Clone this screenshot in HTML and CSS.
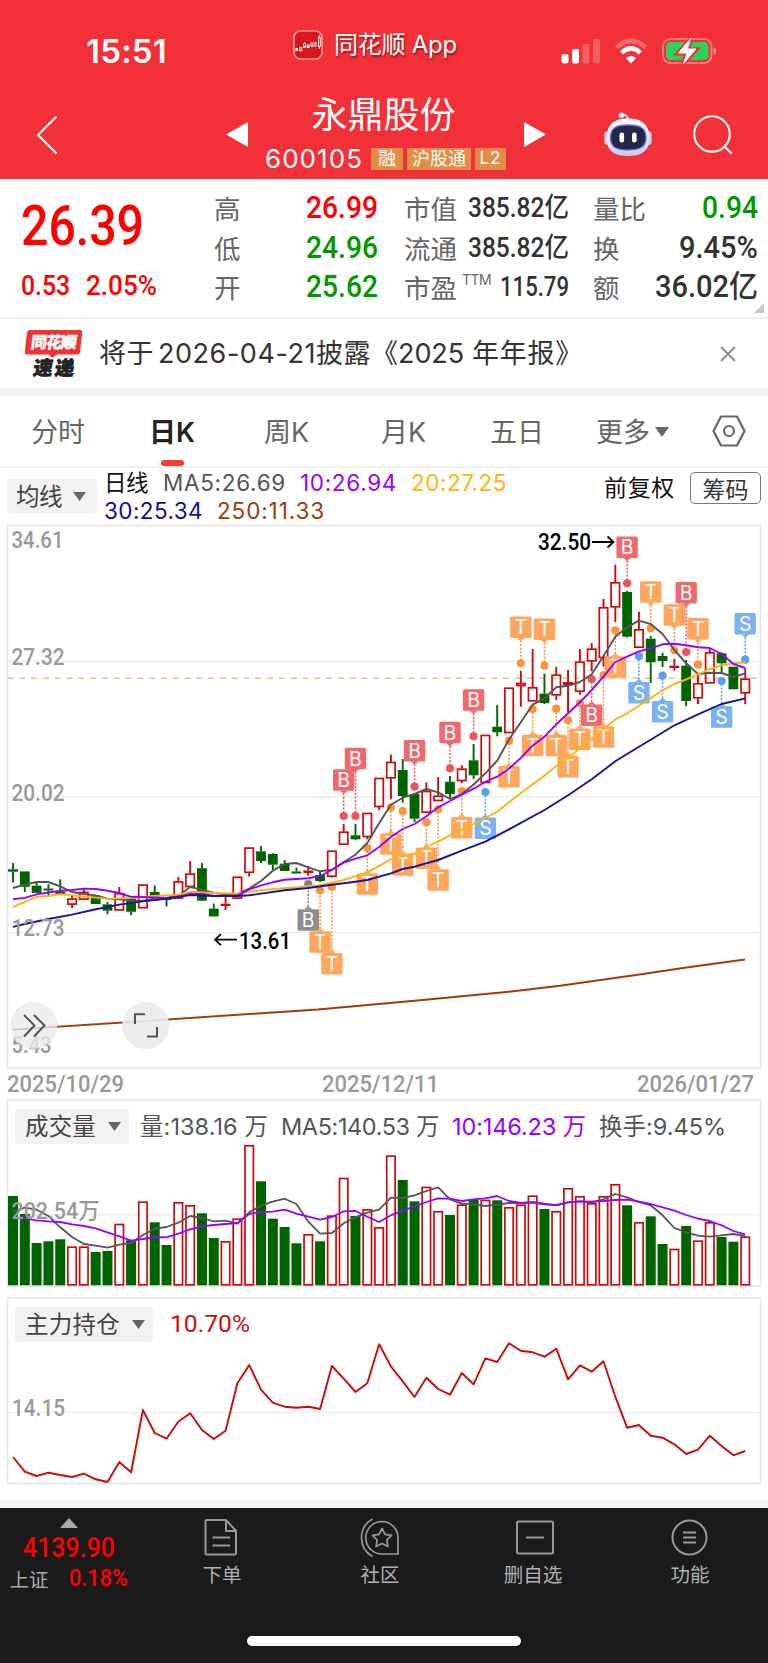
FILE: index.html
```html
<!DOCTYPE html>
<html lang="zh-CN">
<head>
<meta charset="utf-8">
<title>永鼎股份 600105</title>
<link rel="stylesheet" href="styles.css">
</head>
<body>
<div class="app">
  <header class="top">
    <div class="status">
      <div class="clock"><span data-w="81">15:51</span></div>
      <div class="source">
        <svg width="30" height="30" viewBox="0 0 30 30">
          <rect x="1" y="1" width="28" height="28" rx="6.5" fill="#d9161c" stroke="#f7999b" stroke-width="1.6"/>
          <g fill="#fff"><rect x="2.5" y="18" width="2.4" height="3"/><rect x="13.8" y="14.5" width="2.6" height="3.5"/><rect x="21.5" y="12" width="2" height="4.5"/></g>
          <g fill="none" stroke="#fff" stroke-width="1"><rect x="6.8" y="17.5" width="2" height="3.4"/><rect x="10.5" y="13.5" width="2" height="3.6"/><rect x="18" y="13" width="2" height="3.4"/><path d="M25.5 7.500h1.800v9h-1.800zM26.400 5v2.500M26.400 16.500v2.500M11.500 12v1.500"/></g>
        </svg>
        <span data-w="123">同花顺 App</span>
      </div>
      <svg class="signals" width="158" height="28" viewBox="560 37 158 28">
        <g fill="#fff">
          <rect x="561.500" y="54" width="7" height="9.500" rx="2"/><rect x="572" y="49" width="7" height="14.500" rx="2"/>
          <rect x="582.500" y="44" width="7" height="19.500" rx="2" opacity=".22"/><rect x="593" y="39" width="7" height="24.500" rx="2" opacity=".22"/>
        </g>
        <path d="M616.500 47.500Q631 34 645.500 47.500" fill="none" stroke="#fff" stroke-opacity=".28" stroke-width="4.600"/>
        <path d="M621.500 52.800Q631 44 640.500 52.800" fill="none" stroke="#fff" stroke-width="4.400"/>
        <path d="M626 58.200Q631 53.600 636 58.200L631 63.400z" fill="#fff"/>
        <rect x="663" y="39" width="48.500" height="24" rx="7.500" fill="none" stroke="#fff" stroke-opacity=".45" stroke-width="1.700"/>
        <path d="M713.500 47.500q2.500 1 2.500 3.700t-2.500 3.700z" fill="#fff" opacity=".5"/>
        <rect x="666" y="42" width="42.500" height="18" rx="4.500" fill="#30d158"/>
        <path d="M690.500 39L677.500 53.500h8.500L683 64L696.500 49.500h-8.500z" fill="#fff" stroke="#f23038" stroke-width="4"/>
        <path d="M690.500 38.500L678.500 53h8.500L683.500 63.500L696 49h-8.500z" fill="#fff" stroke="#fff" stroke-width="1" stroke-linejoin="round"/>
      </svg>
    </div>
    <nav class="nav">
      <svg class="n-back" width="22" height="40" viewBox="0 0 22 40"><path d="M20.500 1.500L2 20L20.500 38.500" fill="none" stroke="#fff" stroke-width="2"/></svg>
      <svg class="n-prev" width="22" height="25" viewBox="0 0 22 25"><path d="M22 0V25L0 12.500z" fill="#fff"/></svg>
      <div class="title">
        <h1><span data-w="144">永鼎股份</span></h1>
        <div class="code"><span class="num" data-w="98">600105</span><i class="tag t1">融</i><i class="tag t2">沪股通</i><i class="tag t3">L2</i></div>
      </div>
      <svg class="n-next" width="22" height="25" viewBox="0 0 22 25"><path d="M0 0V25L22 12.500z" fill="#fff"/></svg>
      <svg class="n-bot" width="50" height="46" viewBox="603 111 50 46">
        <defs><linearGradient id="shell" x1="0" y1="0" x2="0" y2="1"><stop offset="0" stop-color="#fff"/><stop offset=".6" stop-color="#e6e5f8"/><stop offset="1" stop-color="#cbc8ea"/></linearGradient></defs>
        <path d="M621 115q7-1 7 5" fill="none" stroke="#e4e4f6" stroke-width="2"/><circle cx="621.500" cy="115.300" r="2.700" fill="#f3f1fc"/>
        <rect x="604.300" y="131" width="7" height="14" rx="3.500" fill="#c9c9ec"/><rect x="644.700" y="131" width="7" height="14" rx="3.500" fill="#c9c9ec"/>
        <path d="M628 118.500C643 118.500 649.500 126 649.500 138C649.500 150 643 156 628 156S606.500 150 606.500 138C606.500 126 613 118.500 628 118.500z" fill="url(#shell)"/>
        <path d="M628 125C640 125 646 128 646 137.500S640 150 628 150S610.500 147 610.500 137.500S616 125 628 125z" fill="#202949" stroke="#7468d4" stroke-width="1.300"/>
        <rect x="619.500" y="132.500" width="4.600" height="10" rx="2.200" fill="#fff"/><rect x="632" y="132.500" width="4.600" height="10" rx="2.200" fill="#fff"/>
      </svg>
      <svg class="n-search" width="40" height="40" viewBox="0 0 40 40"><g fill="none" stroke="#fff" stroke-width="2.100"><circle cx="19" cy="19" r="17.800"/><path d="M31 31L38.500 38.500"/></g></svg>
    </nav>
  </header>

  <section class="quote">
    <div class="price">
      <strong><span class="din" data-w="123">26.39</span></strong>
      <div class="chg"><span class="din" data-w="49">0.53</span><span class="din" data-w="71">2.05%</span></div>
    </div>
    <dl class="c1">
      <dt>高</dt><dd class="up"><span class="din" data-w="72">26.99</span></dd>
      <dt>低</dt><dd class="down"><span class="din" data-w="72">24.96</span></dd>
      <dt>开</dt><dd class="down"><span class="din" data-w="72">25.62</span></dd>
    </dl>
    <dl class="c2">
      <dt>市值</dt><dd><span class="din" data-w="101">385.82亿</span></dd>
      <dt>流通</dt><dd><span class="din" data-w="101">385.82亿</span></dd>
      <dt>市盈<sup>TTM</sup></dt><dd><span class="din" data-w="69">115.79</span></dd>
    </dl>
    <dl class="c3">
      <dt>量比</dt><dd class="down"><span class="din" data-w="56">0.94</span></dd>
      <dt>换</dt><dd><span class="din" data-w="79">9.45%</span></dd>
      <dt>额</dt><dd><span class="din" data-w="103">36.02亿</span></dd>
    </dl>
    <svg class="corner" width="10" height="10" viewBox="0 0 10 10"><path d="M10 0V10H0z" fill="#c8c8c8"/></svg>
  </section>

  <section class="news">
    <svg width="60" height="50" viewBox="24 328 60 50">
      <path d="M30 329H80q2.500 0 2.200 2.500L80 351q-.3 2.500-3 2.500H56.500L52 357L49 353.500H27q-2.500 0-2.200-2.500L27 331.500q.3-2.500 3-2.500z" fill="#ee3236"/>
      <g transform="translate(49 0) skewX(-8)" font-family="Noto Sans CJK SC" font-weight="900" text-anchor="middle">
        <text x="53" y="347" font-size="16" fill="#fff" stroke="#fff" stroke-width=".4" textLength="46">同花顺</text>
        <text x="56.500" y="374" font-size="19.500" fill="#222" stroke="#222" stroke-width=".6" textLength="41">速递</text>
      </g>
    </svg>
    <p><span data-w="55">将于</span><span class="nd" data-w="158">2026-04-21</span><span data-w="55">披露</span><span data-w="27">《</span><span data-w="66">2025</span><span class="nb" data-w="111">年年报》</span></p>
    <svg class="close" width="16" height="16" viewBox="0 0 16 16"><path d="M1 1L15 15M15 1L1 15" stroke="#8c8c8c" stroke-width="1.800"/></svg>
  </section>

  <nav class="tabs">
    <span>分时</span><span class="on">日K</span><span>周K</span><span>月K</span><span>五日</span>
    <span class="more">更多<svg width="14" height="10" viewBox="0 0 14 10"><path d="M0 0H14L7 10z" fill="#666"/></svg></span>
    <svg class="hex" width="34" height="32" viewBox="0 0 34 32"><g fill="none" stroke="#666" stroke-width="2.200"><path d="M9 1.500H25L32.500 16L25 30.500H9L1.500 16z" stroke-linejoin="round"/><circle cx="17" cy="16" r="5"/></g></svg>
  </nav>

  <section class="ma">
    <span class="chip chip-ma"><span data-w="46">均线</span><svg width="13" height="9" viewBox="0 0 13 9"><path d="M0 0H13L6.500 9z" fill="#666"/></svg></span>
    <div class="malist">
      <div><b class="k" data-w="44">日线</b><b class="g" data-w="123">MA5:26.69</b><b class="p" data-w="97">10:26.94</b><b class="o" data-w="96">20:27.25</b></div>
      <div><b class="n" data-w="99">30:25.34</b><b class="r" data-w="108">250:11.33</b></div>
    </div>
    <span class="adj"><span data-w="71">前复权</span></span>
    <button class="chipbtn">筹码</button>
  </section>

  <svg id="kline" width="768" height="546" viewBox="0 524 768 546"></svg>
  <div class="dates"><span class="din" data-w="117">2025/10/29</span><span class="din" data-w="117">2025/12/11</span><span class="din" data-w="117">2026/01/27</span></div>

  <section class="panel vol">
    <svg id="volume" width="768" height="190" viewBox="0 1099 768 190"></svg>
    <div class="legend">
      <span class="chip"><span data-w="71">成交量</span><svg width="13" height="9" viewBox="0 0 13 9"><path d="M0 0H13L6.500 9z" fill="#666"/></svg></span>
      <b class="g" data-w="128">量:138.16 万</b><b class="g" data-w="158">MA5:140.53 万</b><b class="p" data-w="134">10:146.23 万</b><b class="g" data-w="127">换手:9.45%</b>
    </div>
  </section>

  <section class="panel hold">
    <svg id="holding" width="768" height="189" viewBox="0 1297 768 189"></svg>
    <div class="legend">
      <span class="chip chip-hold"><span data-w="95">主力持仓</span><svg width="13" height="9" viewBox="0 0 13 9"><path d="M0 0H13L6.500 9z" fill="#666"/></svg></span>
      <b class="red din" data-w="80">10.70%</b>
    </div>
  </section>

  <footer class="bottom">
    <div class="index">
      <svg width="18" height="10" viewBox="0 0 18 10"><path d="M9 0L18 10H0z" fill="#aaa"/></svg>
      <div class="ival"><span class="din" data-w="92">4139.90</span></div>
      <div class="ichg"><em data-w="39">上证</em><span class="din" data-w="59">0.18%</span></div>
    </div>
    <div class="act"><svg width="40" height="40" viewBox="0 0 40 40"><g fill="none" stroke="#989898" stroke-width="2"><path d="M4.500 3H24L34 14V36.500q0 1-1 1H4.500q-1 0-1-1V4q0-1 1-1z"/><path d="M24 3V14H34M10.500 20.500H28M10.500 28.500H28"/></g></svg><span>下单</span></div>
    <div class="act"><svg width="40" height="40" viewBox="0 0 40 40"><g fill="none" stroke="#989898" stroke-width="1.700"><path d="M22 4.500A16.200 16.200 0 0 0 22 37H38V20.700A16.200 16.200 0 0 0 22 4.500z"/><path d="M12.500 2A21.500 21.500 0 0 0 12.500 39.500"/><path d="M22 11.500L25 17.400L31.500 18.400L26.800 23L27.900 29.500L22 26.400L16.100 29.500L17.200 23L12.500 18.400L19 17.400z" stroke-linejoin="round"/></g></svg><span>社区</span></div>
    <div class="act"><svg width="40" height="40" viewBox="0 0 40 40"><g fill="none" stroke="#989898" stroke-width="2"><rect x="4" y="4.500" width="36" height="32" rx="1.500"/><path d="M13 20.500H31"/></g></svg><span>删自选</span></div>
    <div class="act"><svg width="40" height="40" viewBox="0 0 40 40"><g fill="none" stroke="#989898" stroke-width="2"><circle cx="19.500" cy="20.500" r="17"/><path d="M13 15.500H26M13 20.500H26M13 25.500H26"/></g></svg><span>功能</span></div>
    <div class="home"></div>
  </footer>
</div>
<script src="chart.js"></script>
</body>
</html>
```

FILE: styles.css
```css
* { box-sizing: border-box; }
body { margin: 0; background: #fff; font-family: Inter, "Noto Sans CJK SC", sans-serif; color: #333; }
.app { width: 768px; height: 1663px; display: flex; flex-direction: column; overflow: hidden; line-height: 1; white-space: nowrap; }
.app > * { flex: none; }
svg { display: block; overflow: visible; }
[data-w] { display: inline-block; white-space: pre; flex: none; }
.din { transform-origin: 0 50%; }
b, em, i { font-weight: 400; font-style: normal; }

.top { height: 179px; background: #f23038; color: #fff; }
.status { display: grid; grid-template-columns: 207px 267px 158px; padding: 30px 0 0 86px; height: 94px; }
.clock { font-size: 33px; font-weight: 600; padding-top: 5px; }
.source { display: flex; gap: 11px; font-size: 24px; height: 30px; align-items: center; text-shadow: 1px 2px 2px rgba(80,0,0,.55); }
.signals { margin-top: 7px; }
.nav { display: grid; grid-template-columns: 190px 22px 276px 80px 89px 40px; height: 85px; padding-left: 36px; }
.n-back { margin-top: 21px; }
.n-prev, .n-next { margin-top: 28px; }
.n-bot { margin: 17px 0 0 -1px; }
.n-search { margin-top: 21px; }
.title { display: flex; flex-direction: column; align-items: center; }
.title h1 { margin: 3px 5px 0 0; font-size: 36px; font-weight: 400; line-height: 36px; }
.code { display: flex; align-items: center; height: 24px; margin: 13px 1px 0 0; padding-top: 1px; }
.code .num { font-size: 26px; margin-right: 8px; }
.tag { background: #e08d45; font-size: 18px; height: 22px; line-height: 21px; text-align: center; margin-right: 4px; }
.t1 { width: 32px; }
.t2 { width: 64px; }
.t3 { width: 31px; margin-right: 0; font-size: 17px; letter-spacing: 1px; }

.quote { height: 140px; display: grid; grid-template-columns: 193px 190px 189px 164px; padding-left: 21px; border-bottom: 2px solid #f0f0f0; font-family: Roboto, "Noto Sans CJK SC", sans-serif; font-weight: 500; position: relative; }
.price { color: #f00; padding-top: 20px; }
.price strong { display: block; font-size: 55px; font-weight: 500; line-height: 55px; }
.chg { display: flex; gap: 16px; font-size: 28px; margin-top: 18px; line-height: 28px; }
.quote dl { margin: 0; display: grid; grid-template-columns: 56px 1fr; grid-template-rows: repeat(3, 39.7px); align-items: center; padding-top: 9px; }
.quote .c1 { width: 164px; }
.quote .c2 { width: 165px; }
.quote .c3 { width: 165px; }
.quote dt { font-size: 26.5px; color: #666; font-weight: 400; font-family: "Noto Sans CJK SC"; line-height: 30px; height: 30px; }
.quote dd { margin: 1px 0 0; text-align: right; font-size: 30.5px; color: #333; }
.quote dd.up { color: #f00; }
.quote dd.down { color: #090; }
.quote .c2 dd { font-size: 27px; }
.c2 sup { font: 14px Inter, sans-serif; vertical-align: 13px; margin-left: 5px; line-height: 0; letter-spacing: -.5px; }
.corner { position: absolute; right: 4px; bottom: 4px; }

.news { height: 69px; display: flex; align-items: center; padding: 0 32px 0 24px; }
.news p { margin: 0 0 0 15px; font-size: 27px; flex: 1; line-height: 32px; }
.news .nd { margin-left: 4px; }
.news .nb { margin-left: 8px; }
.tabs { height: 80px; border-top: 8px solid #f4f4f4; border-bottom: 2px solid #eee; display: grid; grid-template-columns: 118px 115px 117px 109px 106px 116px 34px; padding-left: 31px; font-size: 27px; color: #666; align-items: center; }
.tabs > span { padding-top: 2px; }
.tabs .on { color: #222; font-weight: 600; position: relative; }
.tabs .on::after { content: ""; position: absolute; left: 12px; top: 43px; width: 23px; height: 6px; border-radius: 3px; background: #fb3b33; }
.more { display: flex; align-items: center; gap: 5px; }

.ma { height: 56px; display: flex; font-size: 22.5px; padding-left: 7px; }
.chip { display: flex; align-items: center; gap: 12px; background: #f2f2f2; color: #444; border-radius: 4px; height: 35px; width: 114px; padding-left: 10px; font-size: 23.5px; flex: none; }
.chip-ma { width: 90px; margin-top: 11px; gap: 11px; padding-left: 9px; }
.chip-hold { width: 138px; }
.malist { margin-left: 7px; padding-top: 1px; width: 500px; flex: none; }
.malist div { display: flex; gap: 14px; height: 28px; align-items: center; }
.malist div:first-child b:first-child { margin-right: 1px; }
.k { color: #111; } .g { color: #555; } .p { color: #9a00ff; } .o { color: #ffb30f; } .n { color: #100c9c; } .r { color: #9c3c0a; } .red { color: #cc1010; }
.adj { color: #111; font-size: 23px; margin-top: 9px; width: 86px; flex: none; }
.chipbtn { flex: none; width: 71px; height: 32px; margin-top: 4px; border: 1.5px solid #777; border-radius: 5px; background: #fff; font: 23px/28px "Noto Sans CJK SC"; color: #333; padding: 0; }
.dates { height: 29px; display: flex; justify-content: space-between; padding: 3px 14px 0 7px; font: 500 23px/23px Roboto, sans-serif; color: #999; }

.panel { display: grid; }
.panel > * { grid-area: 1 / 1; }
.legend { display: flex; height: 35px; align-items: center; margin: 10px 0 0 15px; font-size: 23.5px; }
.vol { height: 198px; }
.vol b:nth-child(2) { margin-left: 11px; }
.vol b + b { margin-left: 13px; }
.hold { height: 203px; }
.hold b { margin-left: 17px; font-family: Roboto; font-weight: 400; font-size: 24.5px; }

.bottom { height: 163px; border-top: 8px solid #f4f4f4; background: #1a1a1a; display: grid; grid-template-columns: 138px 168px 148px 158px 156px; grid-template-rows: 128px 27px; color: #b0b0b0; }
.index { display: flex; flex-direction: column; align-items: center; padding-top: 10px; font-family: Roboto; font-weight: 500; color: #f00; }
.ival { font-size: 27px; line-height: 27px; margin-top: 7px; }
.ichg { font-size: 23.5px; display: flex; align-items: center; gap: 21px; margin-top: 5px; }
.ichg em { color: #aaa; font-family: "Noto Sans CJK SC"; font-size: 19.5px; font-weight: 400; }
.act { display: flex; flex-direction: column; align-items: center; padding-top: 9px; font-size: 19.5px; font-family: "Noto Sans CJK SC"; }
.act span { margin-top: 6px; line-height: 22px; }
.home { grid-column: 1 / -1; justify-self: center; width: 274px; height: 10px; border-radius: 5px; background: #fff; }
```

FILE: chart.js
```js
// Fit every label to the width reserved for it: condensed figures are
// scaled, all other text is spaced out.
document.querySelectorAll('[data-w]').forEach(el => {
  const n = [...el.textContent].length;
  const w = el.getBoundingClientRect().width;
  const target = +el.dataset.w;
  if (el.classList.contains('din')) {
    el.style.transform = `scaleX(${(target / w).toFixed(4)})`;
    el.style.marginRight = (target - w).toFixed(2) + 'px';
  } else {
    el.style.letterSpacing = ((target - w) / n).toFixed(3) + 'px';
  }
});

const X = i => 13 + 11.81 * i;
const RED = '#cc0a0a', GREEN = '#006400';
const line = (pts, color, w = 1.5) => `<polyline points="${pts.map(p => p.join()).join(' ')}" fill="none" stroke="${color}" stroke-width="${w}" stroke-linejoin="round"/>`;
const series = (o, color, w) => line(o.map((y, i) => y == null ? null : [X(i).toFixed(1), y]).filter(Boolean), color, w);
const hline = (y, c = '#ededed') => `<path d="M8 ${y}H760" stroke="${c}" stroke-width="1.4"/>`;
const frame = (y, h) => `<rect x="7.5" y="${y}" width="753" height="${h}" fill="none" stroke="#e6e6e6" stroke-width="1.6"/>`;
const label = (x, y, s, w, c = '#999', size = 23) => `<text x="${x}" y="${y}" font-family="Roboto, Noto Sans CJK SC" font-weight="500" font-size="${size}" fill="${c}" textLength="${w}" lengthAdjust="spacingAndGlyphs">${s}</text>`;

// colour, high, body top, body bottom, low
const K = `g 863 869.3 871.7 882.5|g 871.4 871.4 886.8 892|g 882.9 885.7 892.9 892.9|g 884.3 888.5 890.5 896|g 879.3 891.4 894.3 894.3|r 895 898.6 904.6 908|r 888 892 899.6 899.6|g 895.4 895.4 904 904|g 902 904.3 910.7 914.3|r 887 893.2 910.4 910.4|g 898.6 898.6 911.8 915|r 884.6 884.6 908.2 908.2|g 885.4 892 895.7 895.7|g 898 898.4 900 906.4|r 877 881.4 898.6 898.6|r 861 873.6 887 887|g 863 868.2 900.7 901|g 903.6 908.6 916.4 916.4|r 897 903.7 906 910|r 876.8 876.8 898.6 898.6|r 847.6 847.6 872.8 876.5|g 846 851.3 861 863|g 853.3 854 864.7 870.3|g 860 863.7 871 871|g 867.7 871.5 873.5 873.5|r 866 870.5 873 875.7|g 871 875 881 882|r 850.7 850.7 876.7 877.7|r 824 831.7 844.7 844.7|g 823.7 835.3 839.3 840.3|r 813 813 837 839.3|r 778 778 807 810|r 754.7 762 778.3 799.3|g 759 770 796 802.7|g 793 794 818.7 822|r 782.3 791 812.7 812.7|r 777 795.7 801 801|g 776 781.7 794 798.7|r 765.3 768.7 781 783|g 744 760.3 775.3 779|r 735 735 783 783|g 705 726.7 732.3 736.3|r 687.7 687.7 733 733|r 670.7 683 686 706.7|r 649 687.3 701.3 701.3|g 673.7 693.7 703 704|r 666.7 674.7 695.3 700|r 670 682.3 685 712.3|r 649 661.7 691.7 694.7|r 643 648.7 661.3 671.3|r 599 607.3 658 666.7|r 564.7 582.3 607.3 622|g 591 592 636.7 637.7|r 611.7 629.3 647.7 647.7|g 636 638.7 662.3 683|g 652.7 656 661 667|r 658.7 665.7 668 670.7|g 660 665.7 701 706.3|r 674.3 683.3 698.3 704|r 649 652.3 683.3 683.3|g 652.3 653.3 663.3 672.7|g 666.7 666.7 689.3 689.3|r 668.3 678.7 693.3 704.3`
  .split('|').map(s => { const a = s.split(' '); return [a[0], ...a.slice(1).map(Number)]; });

const candles = K.map(([c, h, t, b, l], i) => {
  const x = X(i), col = c === 'r' ? RED : GREEN;
  const wick = `<path d="M${x} ${h}V${t}M${x} ${b}V${l}" stroke="${col}" stroke-width="1.9"/>`;
  return wick + (c === 'r' && b - t > 2.6
    ? `<rect x="${x - 4.2}" y="${t + .5}" width="8.4" height="${b - t - 1}" fill="none" stroke="${col}" stroke-width="1.7"/>`
    : `<rect x="${x - 4.9}" y="${t}" width="9.8" height="${b - t}" fill="${col}"/>`);
}).join('');

const ma5 = [888,884.6,882,882,886.4,892,894,895.4,898.6,899.3,900.7,900.7,898.6,898,895.7,887,889.6,893,894.3,894,888.5,881,870.7,864,863,867.3,871.3,869.7,862,854.7,843,823.3,804.7,797.7,794,789,792.3,799,794,784.5,773.3,760.7,739.5,722.3,704.7,698.3,687.3,685.7,682,674.3,656,636.7,627.3,620.7,624,634,650,663.3,674,672.7,673,677,673.3];
const ma10 = [899.3,897.9,894.3,892.5,890.7,890,888.6,889,890.7,893,896.8,897,897.5,897.9,896.8,893.6,894.3,895.7,896,895.7,889.3,885.3,882.3,879.7,879,878.3,876,870,862.7,858.7,855.3,847,837,829,824,816.3,807.3,801,794.7,788.7,781.8,776.7,768.7,758,745.7,736.7,724.3,713.3,702.3,690,676.7,662,656.7,651.3,648.3,644.3,643.7,645.3,647.3,648,654,664,668];
const _ = null;
const ma20 = [906.8,902,896.8,896,894.3,_,_,_,898.6,_,898,_,896,_,894.6,891.8,_,893,_,893.6,891.7,_,889,_,887.3,_,885.3,_,880,_,872.3,_,859.3,855.3,853.7,847,841.7,835.3,829.3,824,818,811.7,802.3,793.3,784.3,775.7,766,757.7,748.3,739.3,729.3,719.3,713.3,705.7,698,690.3,684,679.3,674.3,669,665.3,663.3,662.3];
const ma30 = [926.8,924,_,919,_,914.6,_,909.3,_,904.6,_,901.4,_,898.9,_,895,_,896,_,896,895.3,_,_,890.3,_,888,_,884.7,_,881.7,880,_,873.3,869,866.7,_,860,_,850.7,_,841.7,_,829.3,_,_,810,_,795.3,_,779.3,_,761.3,_,746.7,739.7,_,725.3,_,714.3,_,704,_,698.3];

// kind, candle, badge centre, dot centre
const M = `B 28 780 816|B 29 758.5 816|B 34 750.8 786.7|B 37 732.5 768.3|B 39 700 736.3|X 25 920 884|T 26 942 890.3|T 27 963.7 887|T 30 884 848|T 32 844 807.3|T 33 865 811|T 35 858.3 822.3|T 36 880 809.3|T 38 827.7 791|S 40 828.3 792|T 42 776.7 740.7|T 43 627.3 663.3|T 44 745.5 709|T 45 629.3 665.7|T 46 745.5 708.7|T 47 766.7 720.3|T 48 739.3 703|B 49 715.3 679|T 50 737 675|T 51 667 630.3|B 52 547.3 583.3|S 53 692.7 656.3|T 54 592 628.3|S 55 711.8 675.7|T 56 615 650.3|B 57 592.7 652|T 58 628.7 664.7|S 60 717 681|S 62 623.7 659.7`.split('|').map(s => s.split(' '));
const tone = { B: ['#ee6a6e', '#eb555b'], T: ['#ffa55c', '#fb923c'], S: ['#7cb1f2', '#5b9fee'], X: ['#8e8e8e', '#808080'] };
const marks = M.map(([k, i, yb, yd]) => {
  const x = X(+i), up = +yb < +yd ? 1 : -1, e = +yb + up * 10.5;
  const [bg, dot] = tone[k];
  return `<path d="M${x} ${e + up * 3}V${yd}" stroke="${dot}" stroke-width="1.5" stroke-dasharray="2 1.5"/><circle cx="${x}" cy="${yd}" r="4.1" fill="${dot}"/>
  <path d="M${x - 4} ${e}h8l-4 ${up * 3.5}z" fill="${bg}"/><rect x="${x - 10.7}" y="${yb - 10.7}" width="21.4" height="21.4" rx="1.5" fill="${bg}"/>
  <text x="${x}" y="${+yb + 7}" font-family="Inter" font-size="19.5" fill="#fff" text-anchor="middle">${k === 'X' ? 'B' : k}</text>`;
}).join('');

document.getElementById('kline').innerHTML =
  frame(525.5, 542.5) + hline(661.4) + hline(796.8) + hline(932.5) +
  '<path d="M7.5 678.3H760" stroke="#e5c194" stroke-width="1.4" stroke-dasharray="6 5.8"/>' +
  candles + marks +
  series(ma5, '#555', 1.9) + series(ma20, '#ffb30f', 1.9) + series(ma10, '#9a00ff', 1.9) + series(ma30, '#1414a0', 1.9) +
  line([[13,1029.6],[138,1021.5],[249,1014],[318,1009.5],[420,1000.3],[509,991.7],[560,985.8],[636,975],[690,967],[745,959.5]], '#a03c0c', 1.9) +
  label(11.5, 548, '34.61', 52) + label(11.5, 665, '27.32', 53) + label(11.5, 800.5, '20.02', 53) + label(11.5, 936, '12.73', 53) + label(11.5, 1053, '5.43', 40) +
  label(239, 948.5, '13.61', 52, '#000') + label(538, 550, '32.50', 53, '#000') +
  '<path d="M237 939.7H215M221 934.2L215 939.7L221 945.2M592 542H613M607.5 536.5L613.5 542L607.5 547.5" fill="none" stroke="#000" stroke-width="1.8"/>' +
  '<circle cx="33.7" cy="1025.5" r="23.5" fill="#ebebeb" fill-opacity=".78"/><circle cx="145.7" cy="1025.5" r="23.5" fill="#ebebeb" fill-opacity=".9"/>' +
  '<g fill="none" stroke="#555" stroke-width="2"><path d="M24 1015L34.5 1025.5L24 1036.5M34 1015L44.5 1025.5L34 1036.5M145 1014.3H135V1024M147 1036.5H157V1027"/></g>';

// bar tops, in thirds of a pixel below y = 1080
const V = [348,402,489,484,478,500,500,516,513,432,481,365,427,495,367,376,400,474,484,416,196,304,416,441,490,463,484,407,294,408,388,442,227,300,364,321,394,405,374,359,360,361,382,374,347,387,394,325,349,370,349,313,376,427,409,492,507,438,482,427,471,485,470];
const hollow = new Set([5,6,9,11,14,15,18,19,20,25,27,28,30,31,32,35,36,38,40,42,43,44,46,47,48,49,50,51,53,56,58,59,62]);
const vy = v => v == null ? v : +(1080 + v / 3).toFixed(1);
const v5 = [395,383,389,408,442,471,492,497,503,494,489,465,446,441,428,408,414,424,422,431,397,377,365,356,372,425,461,459,430,412,398,389,353,354,346,333,322,358,371,373,378,374,369,369,366,371,376,367,364,367,358,342,352,366,376,406,444,457,467,470,466,462,468].map(vy);
const v10 = [415,415,421,424,426,433,438,445,457,469,482,477,471,472,461,448,439,435,432,429,402,396,395,389,401,410,419,411,394,393,410,426,406,392,379,366,355,356,363,358,355,348,363,369,368,373,375,367,364,365,363,360,359,365,372,382,392,405,416,423,436,453,463].map(vy);
document.getElementById('volume').innerHTML =
  frame(1100, 186) + hline(1214.7) +
  V.map((v, i) => {
    const x = X(i), y = vy(v);
    return hollow.has(i)
      ? `<rect x="${x - 4.2}" y="${y + .5}" width="8.4" height="${1284.3 - y}" fill="#fff" stroke="${RED}" stroke-width="1.7"/>`
      : `<rect x="${x - 5}" y="${y}" width="10" height="${1285.3 - y}" fill="${GREEN}"/>`;
  }).join('') +
  series(v5, '#555', 1.8) + series(v10, '#9a00ff', 1.8) + label(11.5, 1218.5, '202.54万', 88);

const H = [501,545,558,548,555,561,551,568,576,516,547,360,429,446,395,370,420,447,422,280,225,299,338,350,353,350,357,228,266,306,280,163,229,274,321,263,297,314,249,283,205,216,160,182,187,200,176,268,226,245,214,320,413,405,437,443,463,492,479,437,468,496,483];
document.getElementById('holding').innerHTML =
  frame(1298, 185.5) + hline(1412.4) + series(H.map(v => +(1290 + v / 3).toFixed(1)), RED, 1.9) + label(12, 1416, '14.15', 53);
```
